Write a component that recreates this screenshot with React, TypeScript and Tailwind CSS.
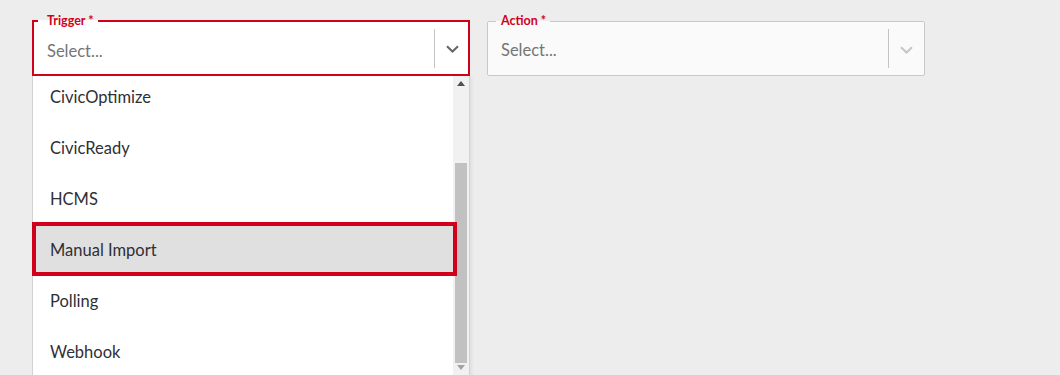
import React from "react";

function Chevron({ color }: { color: string }) {
  return (
    <svg width="13" height="8" viewBox="0 0 13 8" fill="none">
      <path d="M1 1.2 L6.5 6.5 L12 1.2" stroke={color} strokeWidth="2" />
    </svg>
  );
}

const items = ["CivicOptimize", "CivicReady", "HCMS", "Manual Import", "Polling", "Webhook"];

export default function App() {
  return (
    <div className="w-full h-[375px] bg-[#ededed] overflow-hidden flex items-start pl-[32px] pt-[14px] gap-[17px] font-['Lato','Noto_Sans',sans-serif]">
      {/* Trigger */}
      <div className="w-[438px] flex flex-col">
        <fieldset className="relative z-10 border-2 border-[#d0021b] bg-white m-0 p-0 min-w-0">
          <legend className="ml-[4px] pl-[9px] pr-[4px] text-[12.5px] leading-[14px] font-bold text-[#d0021b]">
            Trigger *
          </legend>
          <div className="flex h-[46px]">
            <div className="w-[400px] flex items-center pl-[13px] text-[16.5px] text-[#757575]">
              Select...
            </div>
            <div className="w-px h-[39px] mt-[1px] bg-[#c4c4c4]" />
            <div className="flex-1 flex items-center justify-center pb-[4px] pl-[2px]">
              <Chevron color="#666666" />
            </div>
          </div>
        </fieldset>
        <div className="flex h-[320px] bg-white border-l border-r border-[#d2d2d2] shadow-[2px_0_3px_rgba(0,0,0,0.06)]">
          <div className="flex-1 flex flex-col -mt-[4px]">
            {items.map((it) =>
              it === "Manual Import" ? (
                <div
                  key={it}
                  className="relative z-20 h-[51px] flex items-center pl-[17px] pb-[1px] text-[16.5px] text-[#2f2f36] bg-[#e0e0e0]"
                >
                  {it}
                  <div className="absolute -left-[1px] -right-[4px] -top-[3px] bottom-0 border-4 border-[#d0021b] pointer-events-none" />
                </div>
              ) : (
                <div key={it} className="h-[51px] flex items-center pl-[17px] pb-[1px] text-[16.5px] text-[#2f2f36]">
                  {it}
                </div>
              )
            )}
          </div>
          <div className="w-[16px] bg-[#f1f1f1] flex flex-col items-center">
            <div className="h-[17px] flex items-center justify-center pb-[2px]">
              <svg width="8" height="5" viewBox="0 0 8 5">
                <polygon points="0,5 8,5 4,0" fill="#505050" />
              </svg>
            </div>
            <div className="h-[70px]" />
            <div className="w-[12px] h-[200px] bg-[#c1c1c1]" />
            <div className="mt-[2px]">
              <svg width="8" height="5" viewBox="0 0 8 5">
                <polygon points="0,0 8,0 4,5" fill="#a3a3a3" />
              </svg>
            </div>
          </div>
        </div>
      </div>

      {/* Action */}
      <fieldset className="w-[438px] border border-[#c8c8c8] bg-[#fafafa] rounded-[2px] m-0 p-0 min-w-0">
        <legend className="ml-[8px] pl-[5px] pr-[4px] text-[12.5px] leading-[14px] font-bold text-[#d0021b]">
          Action *
        </legend>
        <div className="flex h-[47px]">
          <div className="w-[400px] flex items-center pl-[13px] pb-[3px] text-[16.5px] text-[#757575]">
            Select...
          </div>
          <div className="w-px h-[39px] mt-[1px] bg-[#c4c4c4]" />
          <div className="flex-1 flex items-center justify-center pb-[4px]">
            <Chevron color="#c6c6c6" />
          </div>
        </div>
      </fieldset>
    </div>
  );
}
